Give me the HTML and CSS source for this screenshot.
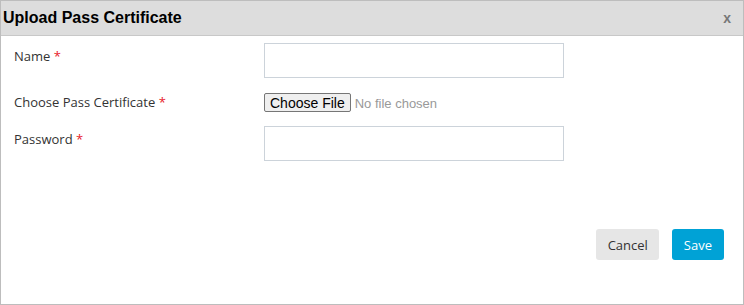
FILE: index.html
```html
<!DOCTYPE html>
<html>
<head>
  <meta charset="UTF-8">
  <title>Upload Pass Certificate</title>
  <link rel="stylesheet" href="styles.css">
</head>
<body>
  <div class="modal">
    <div class="modal-header">
      <span class="modal-title">Upload Pass Certificate</span>
      <span class="modal-close">x</span>
    </div>
    <div class="modal-body">
      <div class="form-row">
        <label for="passName">Name <span class="req">*</span></label>
        <input type="text" id="passName" class="field">
      </div>
      <div class="form-row file-row">
        <label for="passFile">Choose Pass Certificate <span class="req">*</span></label>
        <input type="file" id="passFile" class="file-field">
      </div>
      <div class="form-row">
        <label for="passPassword">Password <span class="req">*</span></label>
        <input type="password" id="passPassword" class="field">
      </div>
    </div>
    <div class="modal-footer">
      <button class="btn btn-cancel">Cancel</button>
      <button class="btn btn-save">Save</button>
    </div>
  </div>
</body>
</html>
```
FILE: styles.css
```css
body {
  margin: 0;
  font-family: "Open Sans", "Noto Sans", sans-serif;
  color: #333;
}

.modal {
  width: 742px;
  height: 303px;
  border: 1px solid #bdbdbd;
  background: #fff;
  display: flex;
  flex-direction: column;
}

.modal-header {
  height: 34px;
  background: #dddddd;
  border-bottom: 1px solid #c8c8c8;
  display: flex;
  align-items: center;
  justify-content: space-between;
  padding: 0 12px 0 2px;
}

.modal-title {
  font-family: "Liberation Sans", Arial, sans-serif;
  font-weight: bold;
  font-size: 16px;
  color: #000;
}

.modal-close {
  font-family: "Liberation Sans", Arial, sans-serif;
  font-weight: bold;
  font-size: 14px;
  color: #777;
  cursor: pointer;
}

.modal-body {
  padding: 7px 0 0 13px;
  flex: 1;
}

.form-row {
  display: flex;
  align-items: flex-start;
  margin-bottom: 15px;
}

.form-row label {
  width: 250px;
  font-size: 13px;
  line-height: 20px;
  padding-top: 3px;
}

.file-row {
  margin-bottom: 14px;
}

.file-row label {
  padding-top: 0;
  margin-top: -1px;
}

.req {
  color: #e8202a;
}

.field {
  width: 300px;
  box-sizing: border-box;
  height: 35px;
  border: 1px solid #ccd3da;
  margin: 0;
  padding: 0 8px;
}

.file-field {
  font-family: "Liberation Sans", Arial, sans-serif;
  font-size: 13px;
  color: #999;
  margin: 0;
  height: 19px;
}

.file-field::file-selector-button {
  font-family: "Liberation Sans", Arial, sans-serif;
  font-size: 14px;
  color: #000;
  background: #efefef;
  border: 1px solid #767676;
  border-radius: 2px;
  height: 19px;
  padding: 0 5px;
  margin-right: 4px;
}

.modal-footer {
  display: flex;
  justify-content: flex-end;
  gap: 13px;
  padding: 0 19px 44px 0;
}

.btn {
  height: 31px;
  border: none;
  border-radius: 3px;
  font-family: "Open Sans", "Noto Sans", sans-serif;
  font-size: 13px;
  padding: 0 12px;
  cursor: pointer;
}

.btn-cancel {
  background: #e6e6e6;
  color: #333;
  padding: 0 11px 0 12px;
}

.btn-save {
  background: #00a2d6;
  color: #fff;
}
```
